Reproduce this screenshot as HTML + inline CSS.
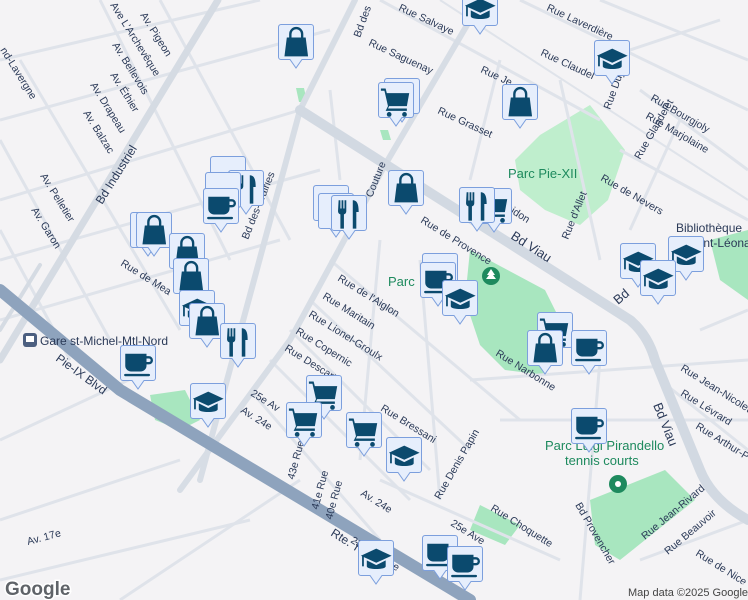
<!DOCTYPE html>
<html><head><meta charset="utf-8"><style>
html,body{margin:0;padding:0;width:748px;height:600px;overflow:hidden;background:#f4f3f5;}
svg{display:block}
text{font-family:"Liberation Sans",sans-serif;}
.s{font-size:10.5px;fill:#2b3a58;}
.p{font-size:13px;fill:#1e8a5e;}
</style></head><body>
<svg width="748" height="600" viewBox="0 0 748 600" xmlns="http://www.w3.org/2000/svg">
<defs>
<g id="m">
<path d="M3,0.5 H33 a2.5,2.5 0 0 1 2.5,2.5 V33 a2.5,2.5 0 0 1 -2.5,2.5 H24 L18,44 L12,35.5 H3 a2.5,2.5 0 0 1 -2.5,-2.5 V3 a2.5,2.5 0 0 1 2.5,-2.5Z" fill="#e6eefc" stroke="#7c9fdd" stroke-width="1"/>
</g>
<g id="cup" fill="#0b4a6e" transform="translate(-3,-3) scale(1.18)"><path d="M7,10 H25 V20 a5,5 0 0 1 -5,5 H12 a5,5 0 0 1 -5,-5Z"/><path d="M24,12 h3 a3.5,3.5 0 0 1 0,7 h-3 v-2 h3 a1.5,1.5 0 0 0 0,-3 h-3z"/><rect x="6" y="27" width="22" height="2" rx="1"/></g>
<g id="bag" fill="#0b4a6e" transform="translate(-3,-3) scale(1.18)"><path d="M10,14 H26 L28,30 H8Z"/><path d="M13,14 v-3 a5,5 0 0 1 10,0 v3" fill="none" stroke="#0b4a6e" stroke-width="2"/></g>
<g id="grad" fill="#0b4a6e" transform="translate(-3,-2) scale(1.18)"><path d="M18,9 L31,15 L18,21 L5,15Z"/><path d="M10,19 v5 c0,3 16,3 16,0 v-5 l-8,4z"/><rect x="6" y="15" width="1.5" height="9"/></g>
<g id="cart" fill="#0b4a6e" transform="translate(-3,-3) scale(1.18)"><path d="M5,8 h4 l1,4 h19 l-2,11 H12 l-1,2 h16 v2 H9 l2,-4 L8,10 H5Z"/><circle cx="12" cy="30" r="2"/><circle cx="25" cy="30" r="2"/></g>
<g id="fork" fill="#0b4a6e" transform="translate(-3,-3) scale(1.18)"><path d="M9,7 h1.5 v7 h1 v-7 h1.5 v7 h1 v-7 h1.5 v9 a3,3 0 0 1 -2,3 V31 h-3 V19 a3,3 0 0 1 -2,-3Z"/><path d="M21,7 c4,0 5,4 5,10 h-2 V31 h-3Z"/></g>
</defs>
<g fill="#a8e6bf">
<path d="M540,135 L590,105 L625,150 L608,200 L580,225 L545,210 L520,190 L515,160Z" fill="#bfeecd"/>
<path d="M470,250 L545,290 L565,330 L545,375 L505,370 L480,345 L465,300Z"/>
<path d="M590,500 L665,470 L695,500 L620,560 L595,545Z"/>
<path d="M150,395 L185,390 L200,420 L180,430 L155,420Z"/>
<path d="M480,505 L520,525 L505,545 L470,530Z"/>
<path d="M710,240 L748,230 L748,300 L720,280Z"/>
<path d="M296,88 l8,0 l3,14 l-8,0z"/><path d="M380,130 l8,0 l3,10 l-8,0z"/>
</g>
<g stroke="#dfe3ea" stroke-width="3" fill="none">
<path d="M0,60 L260,0"/><path d="M0,120 L330,30"/><path d="M0,200 L300,110"/><path d="M0,260 L320,170"/><path d="M0,320 L280,240"/>
<path d="M100,0 L230,260"/><path d="M160,0 L290,240"/><path d="M20,60 L180,330"/><path d="M0,140 L110,340"/><path d="M0,230 L70,360"/><path d="M0,440 L150,370"/><path d="M0,520 L180,460"/>
<path d="M380,0 L600,120"/><path d="M520,0 L748,110"/><path d="M600,0 L748,60"/><path d="M600,60 L720,20"/><path d="M640,90 L748,170"/><path d="M620,150 L748,220"/>
<path d="M330,90 L340,180"/><path d="M560,80 L600,260"/><path d="M500,60 L470,180"/><path d="M680,120 L630,230"/>
<path d="M330,260 L520,420"/><path d="M310,300 L470,450"/><path d="M290,330 L430,470"/><path d="M270,360 L410,500"/><path d="M250,390 L380,540"/>
<path d="M380,240 L360,460"/><path d="M420,260 L440,500"/><path d="M470,380 L748,360"/><path d="M500,420 L748,420"/><path d="M600,360 L580,600"/><path d="M640,560 L748,520"/><path d="M380,480 L560,560"/><path d="M340,520 L460,600"/><path d="M0,580 L250,520"/><path d="M120,600 L300,480"/>
<path d="M660,380 L748,450"/><path d="M700,330 L748,310"/><path d="M440,0 L748,200" stroke-width="2"/>
</g>
<g fill="none" stroke-linecap="round">
<path d="M218,0 L0,360" stroke="#d5dbe3" stroke-width="7"/>
<path d="M0,330 L40,265" stroke="#d5dbe3" stroke-width="4"/>
<path d="M355,0 L300,110 L200,480" stroke="#d7dde5" stroke-width="6"/>
<path d="M470,20 L385,165 L290,340 L180,490" stroke="#d7dde5" stroke-width="6"/>
<path d="M300,110 L630,320 Q648,335 655,360 L700,470 Q712,500 748,520" stroke="#d2d9e2" stroke-width="10"/>
<path d="M0,290 L120,390 L470,600" stroke="#8ea3bd" stroke-width="12"/>
</g>
<circle cx="491" cy="276" r="9" fill="#1e8a5e"/><path d="M491,269 l4,6 h-2 l3,4 h-10 l3,-4 h-2z" fill="#fff"/>
<circle cx="618" cy="484" r="9" fill="#1e8a5e"/><circle cx="618" cy="484" r="3" fill="#fff"/>
<rect x="23" y="333" width="14" height="14" rx="3" fill="#4c5f80"/><rect x="26" y="336" width="8" height="6" fill="#fff"/>
<g class="s">
<text x="40" y="345" font-size="12">Gare st-Michel-Mtl-Nord</text>
<text transform="translate(55,360) rotate(36)" font-size="12">Pie-IX Blvd</text>
<text transform="translate(330,535) rotate(32)" font-size="12">Rte. T</text>
<text transform="translate(102,205) rotate(-58)" font-size="12">Bd Industriel</text>
<text transform="translate(360,38) rotate(-70)">Bd des</text>
<text transform="translate(248,240) rotate(-68)">Bd des-Prairies</text>
<text transform="translate(372,198) rotate(-68)">Couture</text>
<text transform="translate(510,238) rotate(33)" font-size="13">Bd Viau</text>
<text transform="translate(618,305) rotate(-40)" font-size="13">Bd</text>
<text transform="translate(653,405) rotate(68)" font-size="13">Bd Viau</text>
<text transform="translate(420,222) rotate(32)">Rue de Provence</text>
<text transform="translate(490,200) rotate(32)">Blomidon</text>
<text transform="translate(368,45) rotate(25)">Rue Saguenay</text>
<text transform="translate(398,10) rotate(25)">Rue Salvaye</text>
<text transform="translate(437,113) rotate(25)">Rue Grasset</text>
<text transform="translate(540,55) rotate(25)">Rue Claudel</text>
<text transform="translate(546,10) rotate(25)">Rue Laverdière</text>
<text transform="translate(480,72) rotate(25)">Rue Je</text>
<text transform="translate(610,110) rotate(-70)">Rue Dujarié</text>
<text transform="translate(650,100) rotate(30)">Rue Bourgjoly</text>
<text transform="translate(645,118) rotate(30)">Rue Marjolaine</text>
<text transform="translate(600,180) rotate(30)">Rue de Nevers</text>
<text transform="translate(640,160) rotate(-60)">Rue Glandelet</text>
<text transform="translate(568,240) rotate(-68)">Rue d'Allet</text>
<text transform="translate(676,232)" font-size="12">Bibliothèque</text>
<text transform="translate(686,247)" font-size="12">Saint-Léona</text>
<text transform="translate(337,280) rotate(32)">Rue de l'Aiglon</text>
<text transform="translate(322,298) rotate(32)">Rue Maritain</text>
<text transform="translate(308,316) rotate(32)">Rue Lionel-Groulx</text>
<text transform="translate(295,333) rotate(32)">Rue Copernic</text>
<text transform="translate(284,350) rotate(32)">Rue Descarte</text>
<text transform="translate(120,265) rotate(32)">Rue de Mea</text>
<text transform="translate(495,355) rotate(32)">Rue Narbonne</text>
<text transform="translate(680,370) rotate(32)">Rue Jean-Nicolet</text>
<text transform="translate(680,395) rotate(32)">Rue Lévrard</text>
<text transform="translate(695,428) rotate(32)">Rue Arthur-P</text>
<text transform="translate(380,410) rotate(32)">Rue Bressani</text>
<text transform="translate(440,500) rotate(-60)">Rue Denis Papin</text>
<text transform="translate(490,510) rotate(32)">Rue Choquette</text>
<text transform="translate(575,505) rotate(60)">Bd Provencher</text>
<text transform="translate(645,540) rotate(-40)">Rue Jean-Rivard</text>
<text transform="translate(668,555) rotate(-40)">Rue Beauvoir</text>
<text transform="translate(695,555) rotate(32)">Rue de Nice</text>
<text transform="translate(450,525) rotate(32)">25e Ave</text>
<text transform="translate(350,542) rotate(32)">23e Avenue</text>
<text transform="translate(360,495) rotate(32)">Av. 24e</text>
<text transform="translate(250,395) rotate(32)">25e Av</text>
<text transform="translate(240,412) rotate(32)">Av. 24e</text>
<text transform="translate(294,480) rotate(-75)">43e Rue</text>
<text transform="translate(318,510) rotate(-75)">41e Rue</text>
<text transform="translate(332,520) rotate(-75)">40e Rue</text>
<text transform="translate(28,545) rotate(-15)">Av. 17e</text>
<text transform="translate(110,5) rotate(58)">Ave L'Archevêque</text>
<text transform="translate(140,15) rotate(58)">Av. Pigeon</text>
<text transform="translate(112,45) rotate(58)">Av. Bellevois</text>
<text transform="translate(110,75) rotate(58)">Av. Éthier</text>
<text transform="translate(90,85) rotate(58)">Av. Drapeau</text>
<text transform="translate(83,113) rotate(58)">Av. Balzac</text>
<text transform="translate(40,176) rotate(58)">Av. Pelletier</text>
<text transform="translate(31,210) rotate(58)">Av. Garon</text>
<text transform="translate(0,50) rotate(58)">nd-Lavergne</text>
</g>
<text class="p" x="508" y="178" font-size="14">Parc Pie-XII</text>
<text class="p" x="388" y="286">Parc</text>
<text class="p" x="545" y="450">Parc Luigi Pirandello</text>
<text class="p" x="565" y="465">tennis courts</text>
<g>
<g transform="translate(462,-10)"><use href="#m"/><use href="#grad"/></g>
<g transform="translate(278,24)"><use href="#m"/><use href="#bag"/></g>
<g transform="translate(594,40)"><use href="#m"/><use href="#grad"/></g>
<g transform="translate(384,78)"><use href="#m"/></g><g transform="translate(378,82)"><use href="#m"/><use href="#cart"/></g>
<g transform="translate(502,84)"><use href="#m"/><use href="#bag"/></g>
<g transform="translate(210,156)"><use href="#m"/></g><g transform="translate(228,170)"><use href="#m"/><use href="#fork"/></g>
<g transform="translate(205,172)"><use href="#m"/></g><g transform="translate(203,188)"><use href="#m"/><use href="#cup"/></g>
<g transform="translate(388,170)"><use href="#m"/><use href="#bag"/></g>
<g transform="translate(313,185)"><use href="#m"/></g><g transform="translate(318,193)"><use href="#m"/></g><g transform="translate(331,195)"><use href="#m"/><use href="#fork"/></g>
<g transform="translate(476,188)"><use href="#m"/><use href="#cart"/></g><g transform="translate(459,187)"><use href="#m"/><use href="#fork"/></g>
<g transform="translate(130,212)"><use href="#m"/></g><g transform="translate(136,212)"><use href="#m"/><use href="#bag"/></g>
<g transform="translate(169,233)"><use href="#m"/><use href="#bag"/></g>
<g transform="translate(173,258)"><use href="#m"/><use href="#bag"/></g>
<g transform="translate(179,290)"><use href="#m"/><use href="#grad"/></g>
<g transform="translate(189,303)"><use href="#m"/><use href="#bag"/></g>
<g transform="translate(220,323)"><use href="#m"/><use href="#fork"/></g>
<g transform="translate(120,345)"><use href="#m"/><use href="#cup"/></g>
<g transform="translate(422,253)"><use href="#m"/></g><g transform="translate(420,262)"><use href="#m"/><use href="#cup"/></g>
<g transform="translate(442,280)"><use href="#m"/><use href="#grad"/></g>
<g transform="translate(620,243)"><use href="#m"/><use href="#grad"/></g>
<g transform="translate(668,236)"><use href="#m"/><use href="#grad"/></g>
<g transform="translate(640,260)"><use href="#m"/><use href="#grad"/></g>
<g transform="translate(537,312)"><use href="#m"/><use href="#cart"/></g>
<g transform="translate(527,330)"><use href="#m"/><use href="#bag"/></g>
<g transform="translate(571,330)"><use href="#m"/><use href="#cup"/></g>
<g transform="translate(190,383)"><use href="#m"/><use href="#grad"/></g>
<g transform="translate(306,375)"><use href="#m"/><use href="#cart"/></g>
<g transform="translate(286,402)"><use href="#m"/><use href="#cart"/></g>
<g transform="translate(346,412)"><use href="#m"/><use href="#cart"/></g>
<g transform="translate(386,437)"><use href="#m"/><use href="#grad"/></g>
<g transform="translate(571,408)"><use href="#m"/><use href="#cup"/></g>
<g transform="translate(358,540)"><use href="#m"/><use href="#grad"/></g>
<g transform="translate(422,535)"><use href="#m"/><use href="#cup"/></g>
<g transform="translate(447,546)"><use href="#m"/><use href="#cup"/></g>
</g>
<text x="5" y="595" font-size="19" font-weight="bold" fill="#fff" stroke="#fff" stroke-width="3">Google</text>
<text x="5" y="595" font-size="19" font-weight="bold" fill="#5f6368">Google</text>
<rect x="624" y="584" width="124" height="16" fill="#f4f3f5" opacity="0.8"/>
<text x="628" y="596" font-size="11" fill="#444">Map data ©2025 Google</text>
</svg>
</body></html>
